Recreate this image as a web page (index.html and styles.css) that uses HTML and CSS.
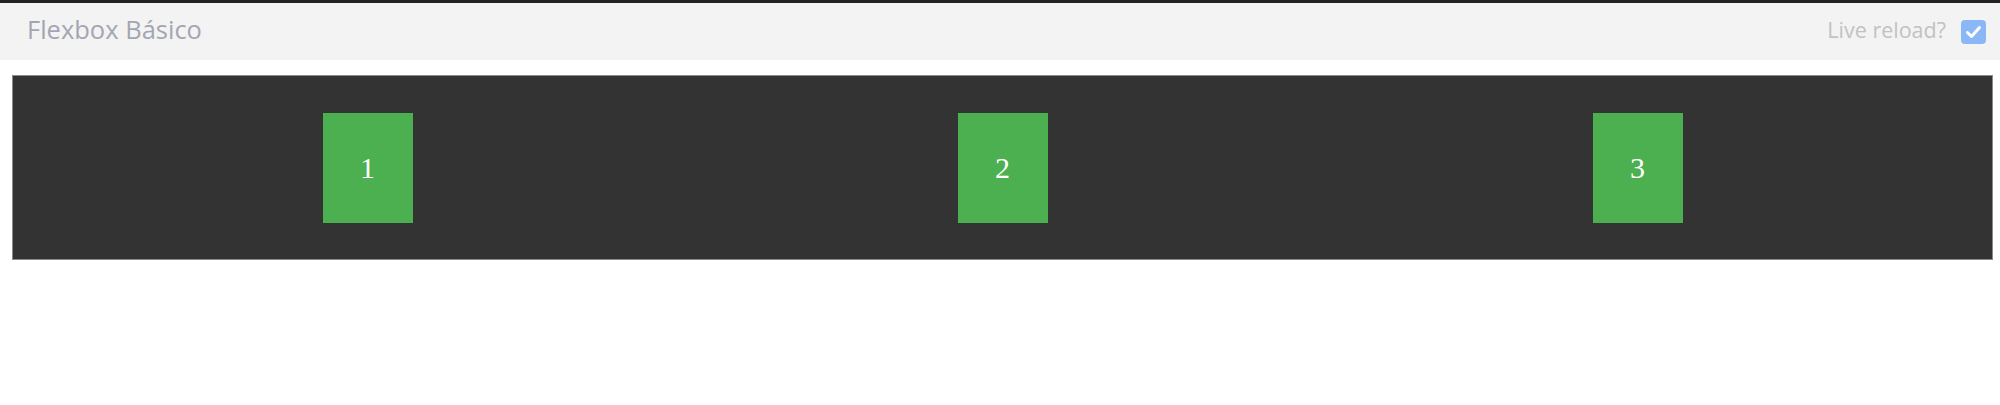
FILE: index.html
```html
<!DOCTYPE html>
<html lang="es">
<head>
<meta charset="utf-8">
<title>Flexbox Básico</title>
<link rel="stylesheet" href="styles.css">
</head>
<body>
<header class="bar">
  <h1 class="title">Flexbox Básico</h1>
  <label class="reload">
    <span class="reload-text">Live reload?</span>
    <span class="check">
      <svg viewBox="0 0 25 24" width="25" height="24" aria-hidden="true">
        <path d="M6.5 12.5 L10.5 16.5 L18.5 7.5" fill="none" stroke="#fff" stroke-width="3" stroke-linecap="round" stroke-linejoin="round"/>
      </svg>
    </span>
  </label>
</header>
<main class="page">
  <div class="flex-container">
    <div class="item">1</div>
    <div class="item">2</div>
    <div class="item">3</div>
  </div>
</main>
</body>
</html>
```

FILE: styles.css
```css
html, body {
  margin: 0;
  padding: 0;
  background: #fff;
}

.bar {
  box-sizing: border-box;
  height: 60px;
  border-top: 3px solid #222;
  background: #f3f3f3;
  display: flex;
  align-items: center;
  justify-content: space-between;
  padding: 0 14px 0 27px;
}

.title {
  margin: 0 0 6px;
  font-family: "Open Sans", "Noto Sans", sans-serif;
  font-weight: 400;
  font-size: 25.5px;
  color: #a3a6b2;
}

.reload {
  display: flex;
  align-items: center;
  gap: 15px;
}

.reload-text {
  margin-bottom: 4px;
  font-family: "Open Sans", "Noto Sans", sans-serif;
  font-size: 21.5px;
  color: #c2c2c2;
}

.check {
  width: 25px;
  height: 24px;
  border-radius: 4px;
  background: #8ab8f6;
  display: flex;
}

.page {
  padding: 15px 7px 0 12px;
}

.flex-container {
  background: #333;
  border: 1px solid #8a8a8a;
  padding: 37px 37px 36px;
  display: flex;
  justify-content: space-around;
}

.item {
  width: 90px;
  height: 110px;
  background: #4caf50;
  color: #fff;
  font-family: "Liberation Serif", "DejaVu Serif", serif;
  font-size: 30px;
  display: flex;
  align-items: center;
  justify-content: center;
}
```
